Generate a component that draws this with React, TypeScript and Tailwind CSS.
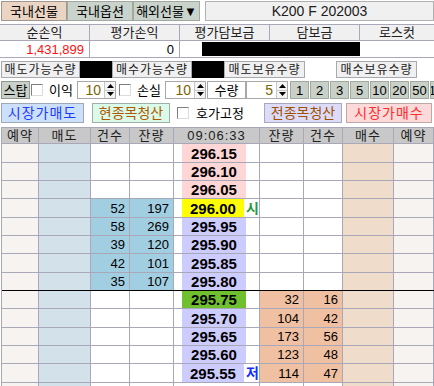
import React from "react"

type Row = {
  price: string
  priceBg: string
  sellCnt?: string
  sellQty?: string
  buyQty?: string
  buyCnt?: string
  mark?: string
  markColor?: string
  lineBelow?: boolean
}

const rows: Row[] = [
  { price: "296.15", priceBg: "bg-[#ffd6d6]" },
  { price: "296.10", priceBg: "bg-[#ffd6d6]" },
  { price: "296.05", priceBg: "bg-[#ffd6d6]" },
  { price: "296.00", priceBg: "bg-[#ffff00]", sellCnt: "52", sellQty: "197", mark: "시", markColor: "text-[#1f9a3a]" },
  { price: "295.95", priceBg: "bg-[#ccccff]", sellCnt: "58", sellQty: "269" },
  { price: "295.90", priceBg: "bg-[#ccccff]", sellCnt: "39", sellQty: "120" },
  { price: "295.85", priceBg: "bg-[#ccccff]", sellCnt: "42", sellQty: "101" },
  { price: "295.80", priceBg: "bg-[#ccccff]", sellCnt: "35", sellQty: "107", lineBelow: true },
  { price: "295.75", priceBg: "bg-[#6fbf2e]", buyQty: "32", buyCnt: "16" },
  { price: "295.70", priceBg: "bg-[#ccccff]", buyQty: "104", buyCnt: "42" },
  { price: "295.65", priceBg: "bg-[#ccccff]", buyQty: "173", buyCnt: "56" },
  { price: "295.60", priceBg: "bg-[#ccccff]", buyQty: "123", buyCnt: "48" },
  { price: "295.55", priceBg: "bg-[#ccccff]", buyQty: "114", buyCnt: "47", mark: "저", markColor: "text-[#1030ff]" },
  { price: "", priceBg: "bg-white" },
]

const cols = "grid grid-cols-[37px_52px_39px_44px_86px_44px_39px_51px_40px]"

function CheckBox() {
  return (
    <div className="shrink-0 w-[12px] h-[12px] border border-t-[#808080] border-l-[#808080] border-b-[#dcdcdc] border-r-[#dcdcdc] bg-white" />
  )
}

function Spin({ value, w }: { value: string; w: string }) {
  return (
    <div className={`${w} shrink-0 h-[18px] flex border border-[#a8a8a8] bg-white`}>
      <span className="flex-1 flex items-center justify-end pr-[3px] text-[14px] leading-none text-[#7a6400]">{value}</span>
      <div className="w-[11px] flex flex-col border-l border-[#c8c8c8] bg-[#f4f4f4]">
        <div className="flex-1 flex items-center justify-center border-b border-[#c8c8c8]">
          <svg width="7" height="4" viewBox="0 0 7 4"><path d="M3.5 0L7 4H0z" fill="#000" /></svg>
        </div>
        <div className="flex-1 flex items-center justify-center">
          <svg width="7" height="4" viewBox="0 0 7 4"><path d="M0 0h7L3.5 4z" fill="#000" /></svg>
        </div>
      </div>
    </div>
  )
}

function Label({ text, w }: { text: string; w: string }) {
  return (
    <div className={`${w} shrink-0 h-[17px] flex items-center justify-center border border-[#a8a8b0] bg-[#f0f0f0] text-[12px] leading-none tracking-[1px] text-[#202020]`}>
      {text}
    </div>
  )
}

export default function App() {
  return (
    <div className="w-[434px] h-[386px] overflow-hidden bg-white pl-px whitespace-nowrap font-['Liberation_Sans','Noto_Sans_CJK_KR',sans-serif] text-black">
      {/* tabs + title */}
      <div className="flex h-[22px] pt-px text-[13px] leading-none">
        <div className="shrink-0 w-[66px] h-[20px] flex items-center justify-center border border-[#a09890] bg-[#ead5c4]">국내선물</div>
        <div className="shrink-0 w-[66px] h-[20px] flex items-center justify-center border border-[#a0a8a0] bg-[#c9d3cc]">국내옵션</div>
        <div className="shrink-0 w-[67px] h-[20px] flex items-center justify-center border border-[#a0a8a0] bg-[#c9d3cc]">해외선물▼</div>
        <div className="ml-[5px] flex-1 h-[20px] flex items-center justify-center border border-[#b0b0b0] bg-[#f0f0f0] text-[14px] text-[#202020]">K200 F 202003</div>
      </div>

      {/* summary */}
      <div className="mt-[2px] -ml-px border-y border-[#a8a8b8] leading-none">
        <div className="flex h-[16px] bg-[#f0f0f0] text-[13px] text-[#202020] border-b border-[#a8a8b8]">
          <div className="w-[90px] border-r border-[#a8a8b8] flex items-center justify-center">순손익</div>
          <div className="w-[90px] border-r border-[#a8a8b8] flex items-center justify-center">평가손익</div>
          <div className="w-[90px] border-r border-[#a8a8b8] flex items-center justify-center">평가담보금</div>
          <div className="w-[90px] border-r border-[#a8a8b8] flex items-center justify-center">담보금</div>
          <div className="flex-1 flex items-center justify-center">로스컷</div>
        </div>
        <div className="flex h-[16px] text-[13px] items-stretch">
          <div className="w-[90px] border-r border-[#a8a8b8] flex items-center justify-end pr-[5px] text-[#ff1010]">1,431,899</div>
          <div className="w-[90px] border-r border-[#a8a8b8] flex items-center justify-end pr-[5px]">0</div>
          <div className="w-[22px]" />
          <div className="w-[158px] my-px bg-black" />
          <div className="flex-1" />
        </div>
      </div>

      {/* available qty */}
      <div className="flex mt-[3px] h-[17px]">
        <Label text="매도가능수량" w="w-[79px]" />
        <div className="shrink-0 w-[32px] h-[17px] bg-black" />
        <Label text="매수가능수량" w="w-[80px]" />
        <div className="shrink-0 w-[32px] h-[17px] bg-black" />
        <Label text="매도보유수량" w="w-[81px]" />
        <div className="shrink-0 w-[31px]" />
        <Label text="매수보유수량" w="w-[81px]" />
      </div>

      {/* stop row */}
      <div className="flex items-center mt-[3px] h-[18px] text-[13px] leading-none">
        <div className="shrink-0 w-[29px] h-[18px] flex items-center justify-center border border-[#909890] bg-[#c8d0c8]">스탑</div>
        <div className="ml-[1px]"><CheckBox /></div>
        <span className="shrink-0 ml-[6px] w-[28px]">이익</span>
        <Spin value="10" w="w-[39px]" />
        <div className="ml-[3px]"><CheckBox /></div>
        <span className="shrink-0 ml-[6px] w-[28px]">손실</span>
        <Spin value="10" w="w-[41px]" />
        <div className="shrink-0 ml-[1px] w-[39px] h-[18px] flex items-center justify-center border border-[#a8a8a8] bg-white">수량</div>
        <Spin value="5" w="w-[42px]" />
        <div className="ml-[2px] flex gap-px">
          {["1", "2", "3", "5", "10", "20", "50", "100"].map((n) => (
            <div key={n} className="shrink-0 w-[19px] h-[18px] flex items-center justify-center border border-[#a0a8a0] bg-[#c8d0c8] overflow-hidden">
              {n}
            </div>
          ))}
        </div>
      </div>

      {/* order buttons */}
      <div className="flex items-center mt-[4px] h-[20px] text-[14px] leading-none">
        <div className="shrink-0 w-[83px] h-[20px] flex items-center justify-center border border-[#a0a8b8] bg-[#cde0fb] text-[#1a3cff] tracking-[1px]">시장가매도</div>
        <div className="shrink-0 ml-[8px] w-[78px] h-[20px] flex items-center justify-center border border-[#a0b0a8] bg-[#dafbe9] text-[#b05a00]">현종목청산</div>
        <div className="ml-[7px]"><CheckBox /></div>
        <span className="shrink-0 ml-[7px] w-[60px] text-[13px]">호가고정</span>
        <div className="shrink-0 ml-[8px] w-[78px] h-[20px] flex items-center justify-center border border-[#a8a8c0] bg-[#dcdcf9] text-[#a05000]">전종목청산</div>
        <div className="shrink-0 ml-[4px] w-[86px] h-[20px] flex items-center justify-center border border-[#c0a8a8] bg-[#fcdada] text-[#ff2a2a] tracking-[1px]">시장가매수</div>
      </div>

      {/* hoga table */}
      <div className="mt-[4px] border-l border-[#a8a8b8]">
        <div className={`${cols} h-[17px] bg-[#c8c8c8] border-y border-[#a8a8b8] text-[13px] text-[#202020]`}>
          {["예약", "매도", "건수", "잔량", "09:06:33", "잔량", "건수", "매수", "예약"].map((h, i) => (
            <div key={i} className="border-r border-[#a8a8b8] flex items-center justify-center leading-none tracking-[1px]">{h}</div>
          ))}
        </div>
        {rows.map((r, i) => (
          <div
            key={i}
            className={`${cols} ${i % 3 === 0 ? "h-[19px]" : "h-[18px]"} border-b ${r.lineBelow ? "border-black" : "border-[#a8a8b8]"} text-[13px] leading-none`}
          >
            <div className="border-r border-[#a8a8b8] bg-[#f6f3f0]" />
            <div className="border-r border-[#a8a8b8] bg-[#d3e2ea]" />
            <div className={`border-r border-[#a8a8b8] flex items-center justify-end pr-[4px] ${r.sellCnt ? "bg-[#a2cee2]" : "bg-white"}`}>{r.sellCnt}</div>
            <div className={`border-r border-[#a8a8b8] flex items-center justify-end pr-[4px] ${r.sellQty ? "bg-[#a2cee2]" : "bg-white"}`}>{r.sellQty}</div>
            <div className="border-r border-[#a8a8b8] flex bg-white">
              <div className="w-[8px]" />
              <div className={`w-[64px] flex items-center justify-center font-bold text-[15px] ${r.priceBg}`}>{r.price}</div>
              <div className={`flex-1 flex items-center pl-[2px] font-bold text-[14px] ${r.markColor ?? ""}`}>{r.mark}</div>
            </div>
            <div className={`border-r border-[#a8a8b8] flex items-center justify-end pr-[4px] ${r.buyQty ? "bg-[#f0c0a2]" : "bg-white"}`}>{r.buyQty}</div>
            <div className={`border-r border-[#a8a8b8] flex items-center justify-end pr-[4px] ${r.buyCnt ? "bg-[#f0c0a2]" : "bg-white"}`}>{r.buyCnt}</div>
            <div className="border-r border-[#a8a8b8] bg-[#f0dcca]" />
            <div className="border-r border-[#a8a8b8] bg-[#f6f3f0]" />
          </div>
        ))}
      </div>
    </div>
  )
}
